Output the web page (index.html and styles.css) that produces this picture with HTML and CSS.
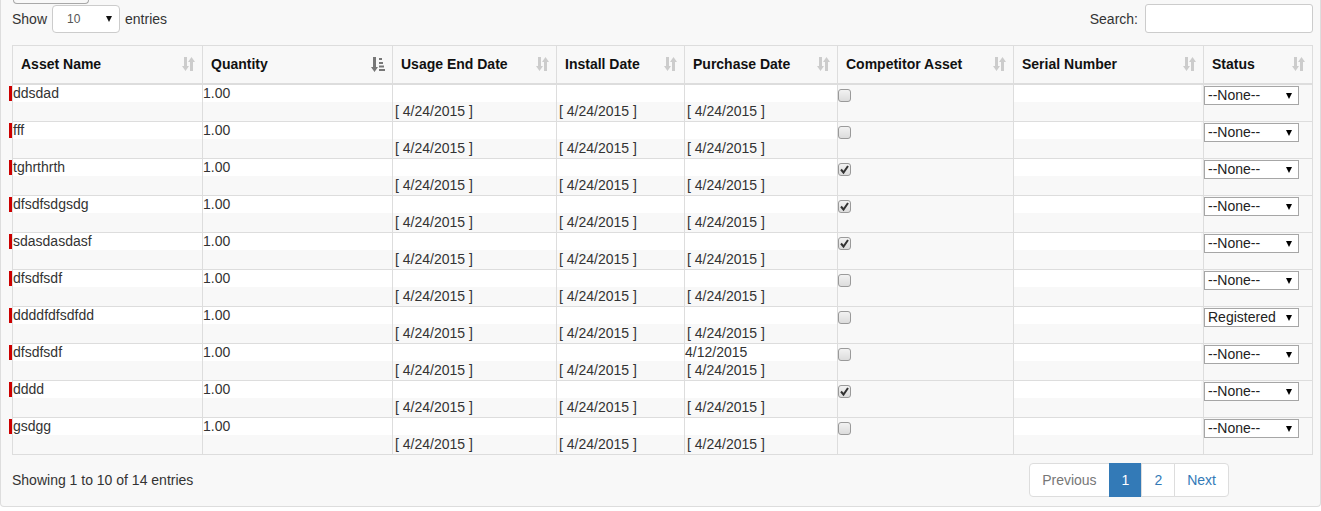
FILE: index.html
```html
<!DOCTYPE html>
<html>
<head>
<meta charset="utf-8">
<title>Assets</title>
<link rel="stylesheet" href="styles.css">
</head>
<body>
<div class="panel">
  <div class="stub"></div>
  <div class="toolbar">
    <div class="length">
      <span>Show</span>
      <span class="len-sel"><select class="len"><option>10</option><option>25</option></select></span>
      <span>entries</span>
    </div>
    <div class="search">
      <span>Search:</span>
      <input type="text" class="search-in">
    </div>
  </div>

  <table class="grid">
    <thead>
      <tr>
        <th class="c1"><div class="th-in"><span>Asset Name</span><svg class="ic" width="13" height="14" viewBox="0 0 13 14"><path d="M2 0h3v9h2l-3.5 5L0 9h2z M8 14h3V5h2L9.5 0 6 5h2z"/></svg></div></th>
        <th class="c2"><div class="th-in"><span>Quantity</span><svg class="ic on" width="14" height="15" viewBox="0 0 14 15"><path d="M2 0h3v10h2l-3.5 5L0 10h2z"/><rect x="8" y="1" width="3" height="2"/><rect x="8" y="5" width="4" height="2"/><rect x="8" y="8.5" width="5" height="2"/><rect x="8" y="12" width="6" height="2"/></svg></div></th>
        <th class="c3"><div class="th-in"><span>Usage End Date</span><svg class="ic" width="13" height="14" viewBox="0 0 13 14"><path d="M2 0h3v9h2l-3.5 5L0 9h2z M8 14h3V5h2L9.5 0 6 5h2z"/></svg></div></th>
        <th class="c4"><div class="th-in"><span>Install Date</span><svg class="ic" width="13" height="14" viewBox="0 0 13 14"><path d="M2 0h3v9h2l-3.5 5L0 9h2z M8 14h3V5h2L9.5 0 6 5h2z"/></svg></div></th>
        <th class="c5"><div class="th-in"><span>Purchase Date</span><svg class="ic" width="13" height="14" viewBox="0 0 13 14"><path d="M2 0h3v9h2l-3.5 5L0 9h2z M8 14h3V5h2L9.5 0 6 5h2z"/></svg></div></th>
        <th class="c6"><div class="th-in"><span>Competitor Asset</span><svg class="ic" width="13" height="14" viewBox="0 0 13 14"><path d="M2 0h3v9h2l-3.5 5L0 9h2z M8 14h3V5h2L9.5 0 6 5h2z"/></svg></div></th>
        <th class="c7"><div class="th-in"><span>Serial Number</span><svg class="ic" width="13" height="14" viewBox="0 0 13 14"><path d="M2 0h3v9h2l-3.5 5L0 9h2z M8 14h3V5h2L9.5 0 6 5h2z"/></svg></div></th>
        <th class="c8"><div class="th-in"><span>Status</span><svg class="ic" width="13" height="14" viewBox="0 0 13 14"><path d="M2 0h3v9h2l-3.5 5L0 9h2z M8 14h3V5h2L9.5 0 6 5h2z"/></svg></div></th>
      </tr>
    </thead>
    <tbody>
      <tr>
        <td><div class="v req">ddsdad</div><div class="d"></div></td>
        <td><div class="v">1.00</div><div class="d"></div></td>
        <td><div class="v"></div><div class="d">[ 4/24/2015 ]</div></td>
        <td><div class="v"></div><div class="d">[ 4/24/2015 ]</div></td>
        <td><div class="v"></div><div class="d">[ 4/24/2015 ]</div></td>
        <td><span class="cb"></span></td>
        <td><div class="v sn"></div></td>
        <td><span class="st"><select><option>--None--</option><option>Registered</option></select></span></td>
      </tr>
      <tr>
        <td><div class="v req">fff</div><div class="d"></div></td>
        <td><div class="v">1.00</div><div class="d"></div></td>
        <td><div class="v"></div><div class="d">[ 4/24/2015 ]</div></td>
        <td><div class="v"></div><div class="d">[ 4/24/2015 ]</div></td>
        <td><div class="v"></div><div class="d">[ 4/24/2015 ]</div></td>
        <td><span class="cb"></span></td>
        <td><div class="v sn"></div></td>
        <td><span class="st"><select><option>--None--</option><option>Registered</option></select></span></td>
      </tr>
      <tr>
        <td><div class="v req">tghrthrth</div><div class="d"></div></td>
        <td><div class="v">1.00</div><div class="d"></div></td>
        <td><div class="v"></div><div class="d">[ 4/24/2015 ]</div></td>
        <td><div class="v"></div><div class="d">[ 4/24/2015 ]</div></td>
        <td><div class="v"></div><div class="d">[ 4/24/2015 ]</div></td>
        <td><span class="cb on"><svg width="11" height="11" viewBox="0 0 11 11"><path d="M2 5.5l2.5 3L9 2"/></svg></span></td>
        <td><div class="v sn"></div></td>
        <td><span class="st"><select><option>--None--</option><option>Registered</option></select></span></td>
      </tr>
      <tr>
        <td><div class="v req">dfsdfsdgsdg</div><div class="d"></div></td>
        <td><div class="v">1.00</div><div class="d"></div></td>
        <td><div class="v"></div><div class="d">[ 4/24/2015 ]</div></td>
        <td><div class="v"></div><div class="d">[ 4/24/2015 ]</div></td>
        <td><div class="v"></div><div class="d">[ 4/24/2015 ]</div></td>
        <td><span class="cb on"><svg width="11" height="11" viewBox="0 0 11 11"><path d="M2 5.5l2.5 3L9 2"/></svg></span></td>
        <td><div class="v sn"></div></td>
        <td><span class="st"><select><option>--None--</option><option>Registered</option></select></span></td>
      </tr>
      <tr>
        <td><div class="v req">sdasdasdasf</div><div class="d"></div></td>
        <td><div class="v">1.00</div><div class="d"></div></td>
        <td><div class="v"></div><div class="d">[ 4/24/2015 ]</div></td>
        <td><div class="v"></div><div class="d">[ 4/24/2015 ]</div></td>
        <td><div class="v"></div><div class="d">[ 4/24/2015 ]</div></td>
        <td><span class="cb on"><svg width="11" height="11" viewBox="0 0 11 11"><path d="M2 5.5l2.5 3L9 2"/></svg></span></td>
        <td><div class="v sn"></div></td>
        <td><span class="st"><select><option>--None--</option><option>Registered</option></select></span></td>
      </tr>
      <tr>
        <td><div class="v req">dfsdfsdf</div><div class="d"></div></td>
        <td><div class="v">1.00</div><div class="d"></div></td>
        <td><div class="v"></div><div class="d">[ 4/24/2015 ]</div></td>
        <td><div class="v"></div><div class="d">[ 4/24/2015 ]</div></td>
        <td><div class="v"></div><div class="d">[ 4/24/2015 ]</div></td>
        <td><span class="cb"></span></td>
        <td><div class="v sn"></div></td>
        <td><span class="st"><select><option>--None--</option><option>Registered</option></select></span></td>
      </tr>
      <tr>
        <td><div class="v req">ddddfdfsdfdd</div><div class="d"></div></td>
        <td><div class="v">1.00</div><div class="d"></div></td>
        <td><div class="v"></div><div class="d">[ 4/24/2015 ]</div></td>
        <td><div class="v"></div><div class="d">[ 4/24/2015 ]</div></td>
        <td><div class="v"></div><div class="d">[ 4/24/2015 ]</div></td>
        <td><span class="cb"></span></td>
        <td><div class="v sn"></div></td>
        <td><span class="st"><select><option>Registered</option><option>--None--</option></select></span></td>
      </tr>
      <tr>
        <td><div class="v req">dfsdfsdf</div><div class="d"></div></td>
        <td><div class="v">1.00</div><div class="d"></div></td>
        <td><div class="v"></div><div class="d">[ 4/24/2015 ]</div></td>
        <td><div class="v"></div><div class="d">[ 4/24/2015 ]</div></td>
        <td><div class="v">4/12/2015</div><div class="d">[ 4/24/2015 ]</div></td>
        <td><span class="cb"></span></td>
        <td><div class="v sn"></div></td>
        <td><span class="st"><select><option>--None--</option><option>Registered</option></select></span></td>
      </tr>
      <tr>
        <td><div class="v req">dddd</div><div class="d"></div></td>
        <td><div class="v">1.00</div><div class="d"></div></td>
        <td><div class="v"></div><div class="d">[ 4/24/2015 ]</div></td>
        <td><div class="v"></div><div class="d">[ 4/24/2015 ]</div></td>
        <td><div class="v"></div><div class="d">[ 4/24/2015 ]</div></td>
        <td><span class="cb on"><svg width="11" height="11" viewBox="0 0 11 11"><path d="M2 5.5l2.5 3L9 2"/></svg></span></td>
        <td><div class="v sn"></div></td>
        <td><span class="st"><select><option>--None--</option><option>Registered</option></select></span></td>
      </tr>
      <tr>
        <td><div class="v req">gsdgg</div><div class="d"></div></td>
        <td><div class="v">1.00</div><div class="d"></div></td>
        <td><div class="v"></div><div class="d">[ 4/24/2015 ]</div></td>
        <td><div class="v"></div><div class="d">[ 4/24/2015 ]</div></td>
        <td><div class="v"></div><div class="d">[ 4/24/2015 ]</div></td>
        <td><span class="cb"></span></td>
        <td><div class="v sn"></div></td>
        <td><span class="st"><select><option>--None--</option><option>Registered</option></select></span></td>
      </tr>
    </tbody>
  </table>

  <div class="footer">
    <div class="info">Showing 1 to 10 of 14 entries</div>
    <ul class="pager">
      <li class="disabled"><a>Previous</a></li>
      <li class="active"><a>1</a></li>
      <li><a>2</a></li>
      <li><a>Next</a></li>
    </ul>
  </div>
</div>
</body>
</html>
```

FILE: styles.css
```css
html, body {
  margin: 0;
  padding: 0;
  background: #fff;
}
body {
  font-family: "Liberation Sans", Arial, sans-serif;
  font-size: 14px;
  color: #333;
}
.panel {
  background: #f8f8f8;
  border: 1px solid #dddddd;
  border-top: none;
  border-radius: 0 0 4px 4px;
  padding: 0 7px 9px 11px;
  height: 507px;
  box-sizing: border-box;
}
.stub {
  width: 76px;
  height: 4px;
  box-sizing: border-box;
  margin-left: 1px;
  border: 1px solid #a8a8a8;
  border-top: none;
  border-radius: 0 0 4px 4px;
}
.toolbar {
  margin-top: 0;
  margin-bottom: 12px;
  height: 29px;
  display: flex;
  justify-content: space-between;
  align-items: center;
}
.length {
  display: flex;
  align-items: center;
  gap: 5px;
}
.len-sel {
  position: relative;
  display: inline-block;
}
.len-sel::after {
  content: "";
  position: absolute;
  right: 8px;
  top: 11px;
  border-left: 3.5px solid transparent;
  border-right: 3.5px solid transparent;
  border-top: 6px solid #111;
  pointer-events: none;
}
select.len {
  -webkit-appearance: none;
  appearance: none;
  width: 68px;
  height: 28px;
  border: 1px solid #ccc;
  border-radius: 4px;
  background: #fff;
  font-family: "Liberation Sans", Arial, sans-serif;
  font-size: 12px;
  color: #555;
  padding: 0 0 0 14px;
  display: block;
}
.search {
  display: flex;
  align-items: center;
  gap: 7px;
}
.search-in {
  width: 168px;
  height: 29px;
  box-sizing: border-box;
  border: 1px solid #ccc;
  border-radius: 3px;
  background: #fff;
  margin: 0;
}
table.grid {
  border-collapse: separate;
  border-spacing: 0;
  table-layout: fixed;
  width: 1301px;
  border-top: 1px solid #ddd;
  border-left: 1px solid #ddd;
}
.grid th, .grid td {
  box-sizing: border-box;
  border-right: 1px solid #ddd;
  border-bottom: 1px solid #ddd;
  padding: 0;
  text-align: left;
  vertical-align: top;
}
.grid th {
  padding: 8px 7px 9px 8px;
  height: 39px;
  border-bottom: 2px solid #ddd;
  font-weight: bold;
  line-height: 20px;
  color: #111;
}
.c1 { width: 190px; }
.c2 { width: 190px; }
.c3 { width: 164px; }
.c4 { width: 128px; }
.c5 { width: 153px; }
.c6 { width: 176px; }
.c7 { width: 190px; }
.c8 { width: 109px; }
.th-in {
  display: flex;
  justify-content: space-between;
  align-items: center;
}
.ic {
  fill: #cccccc;
  flex: none;
}
.ic.on {
  fill: #777;
}
.grid td {
  height: 37px;
}
.v {
  height: 17px;
  line-height: 17px;
  background: #fff;
  white-space: nowrap;
}
.v.req {
  position: relative;
}
.v.req::before {
  content: "";
  position: absolute;
  left: -4px;
  top: 1px;
  width: 3px;
  height: 15px;
  background: #c00;
}
.v.sn {
  margin-right: 2px;
}
.d {
  height: 19px;
  line-height: 19px;
  padding-left: 2px;
  white-space: nowrap;
}
.cb {
  display: block;
  width: 13px;
  height: 13px;
  box-sizing: border-box;
  margin-top: 4px;
  border: 1px solid #9a9a9a;
  border-radius: 3px;
  background: linear-gradient(#f2f2f2, #dcdcdc);
  position: relative;
}
.cb svg {
  display: block;
  margin: 0;
}
.cb svg path {
  fill: none;
  stroke: #333;
  stroke-width: 2;
}
.st {
  position: relative;
  display: block;
  width: 95px;
  margin-top: 1px;
}
.st::after {
  content: "";
  position: absolute;
  right: 7px;
  top: 7px;
  border-left: 3.5px solid transparent;
  border-right: 3.5px solid transparent;
  border-top: 6px solid #000;
  pointer-events: none;
}
.st select {
  -webkit-appearance: none;
  appearance: none;
  display: block;
  width: 95px;
  height: 19px;
  margin: 0;
  border: 1px solid #a6a6a6;
  border-radius: 0;
  background: #fff;
  font-family: "Liberation Sans", Arial, sans-serif;
  font-size: 14px;
  color: #222;
  padding: 0 0 0 3px;
  line-height: 17px;
}
.footer {
  margin-top: 8px;
  display: flex;
  justify-content: space-between;
  align-items: center;
}
.pager {
  list-style: none;
  margin: 0 84px 0 0;
  padding: 0;
  display: flex;
}
.pager li a {
  display: block;
  padding: 0 12px;
  height: 34px;
  line-height: 32px;
  box-sizing: border-box;
  border: 1px solid #ddd;
  margin-left: -1px;
  background: #fff;
  color: #337ab7;
}
.pager li:first-child a {
  margin-left: 0;
  border-radius: 4px 0 0 4px;
}
.pager li:last-child a {
  border-radius: 0 4px 4px 0;
}
.pager li.disabled a {
  color: #777;
}
.pager li.active a {
  background: #337ab7;
  border-color: #337ab7;
  color: #fff;
}
```
